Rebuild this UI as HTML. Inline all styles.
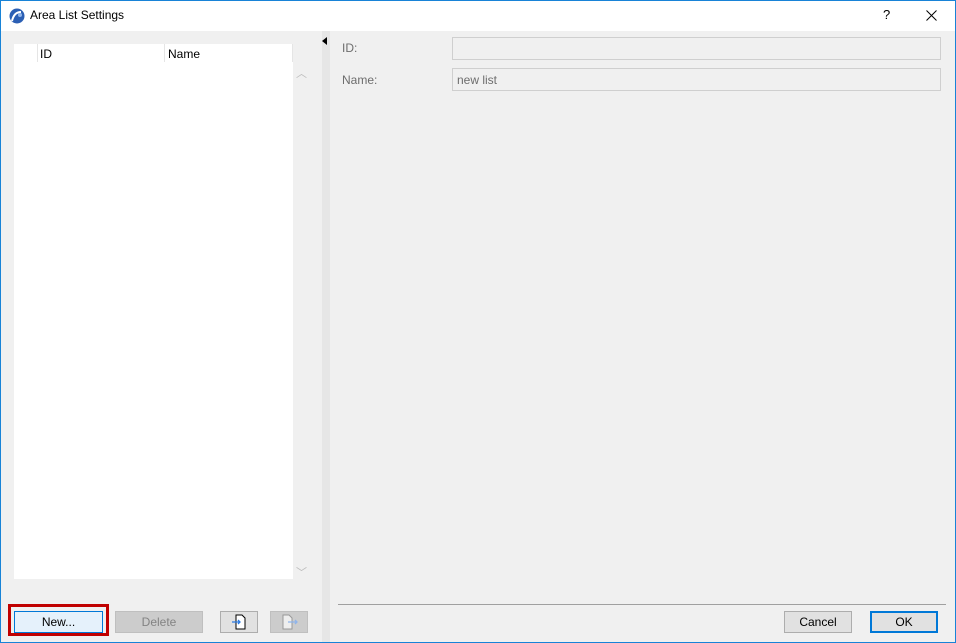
<!DOCTYPE html>
<html><head><style>
*{margin:0;padding:0;box-sizing:border-box}
body{width:956px;height:643px;overflow:hidden;font-family:"Segoe UI","Liberation Sans",sans-serif;font-size:12px;background:#f0f0f0;position:relative}
.abs{position:absolute}
.win{position:absolute;left:0;top:0;width:956px;height:643px;border:1px solid #1883d7;pointer-events:none}
.btn{position:absolute;height:22px;border:1px solid #adadad;background:#e1e1e1;text-align:center;line-height:21px;color:#000}
.inp{position:absolute;left:452px;width:489px;height:23px;border:1px solid #cfcfcf;background:#f0f0f0;color:#6d6d6d;padding-left:4px;line-height:22px}
.lbl{position:absolute;left:342px;color:#6d6d6d}
</style></head><body>
<div class="abs" style="left:0;top:0;width:956px;height:31px;background:#fff"></div>
<svg class="abs" style="left:9px;top:8px" width="16" height="16" viewBox="0 0 16 16"><circle cx="8" cy="8" r="7.5" fill="#2b5fb4"/><path d="M3 13 Q5 4 12 4" stroke="#fff" stroke-width="2" fill="none"/><circle cx="11" cy="7" r="2" fill="#8fb4ea"/></svg>
<div class="abs" style="left:30px;top:8px;font-size:12px">Area List Settings</div>
<div class="abs" style="left:883px;top:7px;font-size:13px">?</div>
<svg class="abs" style="left:926px;top:10px" width="11" height="11" viewBox="0 0 11 11"><path d="M0.5 0.5L10.5 10.5M10.5 0.5L0.5 10.5" stroke="#000" stroke-width="1"/></svg>
<div class="abs" style="left:322px;top:31px;width:8px;height:611px;background:#e6e6e6"></div>
<div class="abs" style="left:322px;top:37px;width:0;height:0;border-top:4px solid transparent;border-bottom:4px solid transparent;border-right:5px solid #000"></div>
<div class="abs" style="left:14px;top:44px;width:279px;height:535px;background:#fff"></div>
<div class="abs" style="left:292px;top:44px;width:1px;height:18px;background:#e5e5e5"></div>
<div class="abs" style="left:37px;top:44px;width:1px;height:18px;background:#e5e5e5"></div>
<div class="abs" style="left:164px;top:44px;width:1px;height:18px;background:#e5e5e5"></div>
<div class="abs" style="left:40px;top:47px">ID</div>
<div class="abs" style="left:168px;top:47px">Name</div>
<div class="abs" style="left:296px;top:65px;color:#bbb;font-size:11px">︿</div>
<div class="abs" style="left:296px;top:564px;color:#bbb;font-size:11px">﹀</div>
<div class="lbl" style="top:41px">ID:</div>
<div class="lbl" style="top:73px">Name:</div>
<div class="inp" style="top:37px"></div>
<div class="inp" style="top:68px">new list</div>
<div class="abs" style="left:338px;top:604px;width:608px;height:1px;background:#a0a0a0"></div>
<div class="abs" style="left:8px;top:604px;width:101px;height:32px;border:3px solid #c00000"></div>
<div class="btn" style="left:14px;top:611px;width:89px;border-color:#0078d7;background:#e5f1fb">New...</div>
<div class="btn" style="left:115px;top:611px;width:88px;background:#cccccc;border-color:#bfbfbf;color:#838383">Delete</div>
<div class="btn" style="left:220px;top:611px;width:38px"><svg width="20" height="18" viewBox="0 0 20 18" style="margin-top:1px"><path d="M7 2h6l3 3v11H7z" fill="#fff" stroke="#000"/><path d="M3 9h8M9 7l2 2-2 2" stroke="#2a7ae2" fill="none" stroke-width="1.3"/></svg></div>
<div class="btn" style="left:270px;top:611px;width:38px;background:#cccccc;border-color:#bfbfbf"><svg width="20" height="18" viewBox="0 0 20 18" style="margin-top:1px"><path d="M4 2h6l3 3v11H4z" fill="#eee" stroke="#999"/><path d="M9 9h9M16 7l2 2-2 2" stroke="#8fb4ea" fill="none" stroke-width="1.3"/></svg></div>
<div class="btn" style="left:784px;top:611px;width:68px">Cancel</div>
<div class="btn" style="left:870px;top:611px;width:68px;border:2px solid #0078d7;line-height:19px">OK</div>
<div class="win"></div>
</body></html>
